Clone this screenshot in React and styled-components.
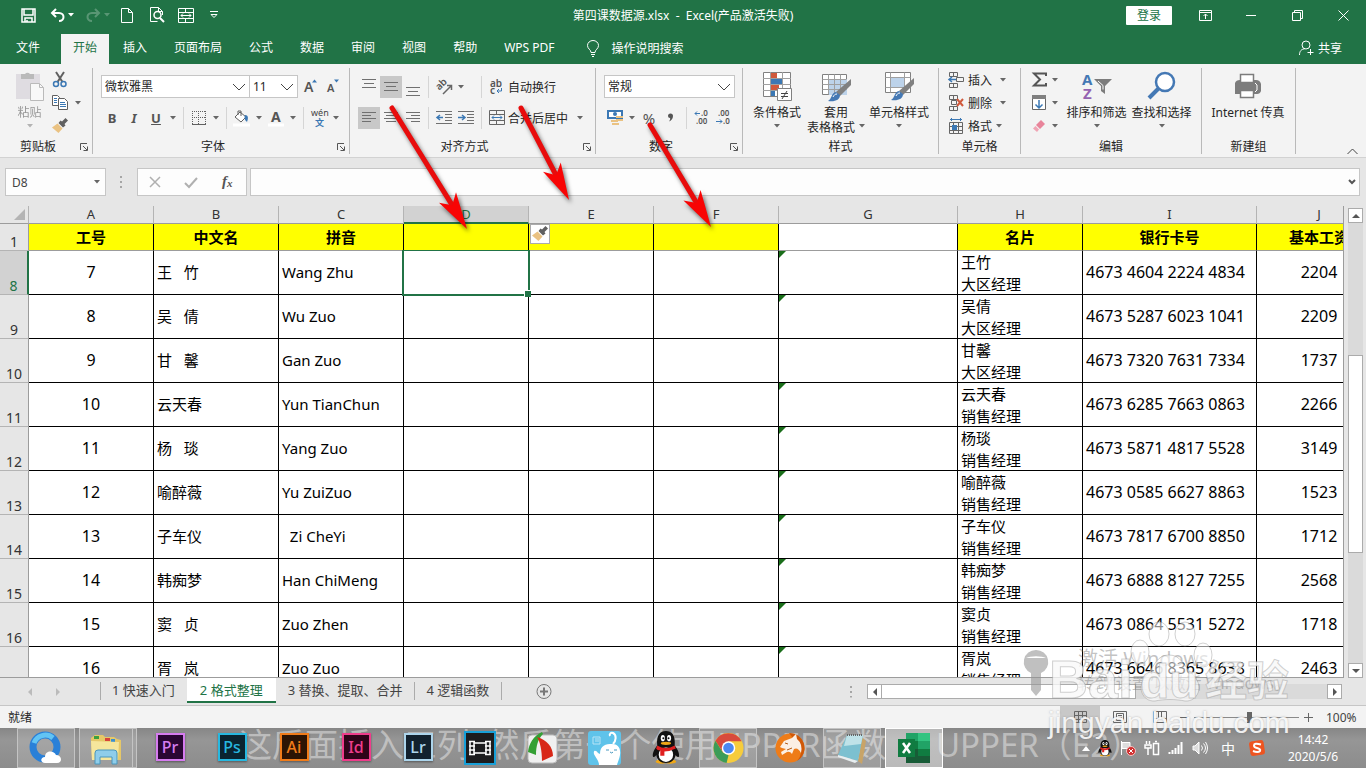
import styled, { createGlobalStyle, css } from "styled-components";

const GlobalStyle = createGlobalStyle`
  * {
    box-sizing: border-box;
  }

  body {
    margin: 0;
    font-family: "Noto Sans", "Noto Sans CJK SC", sans-serif;
    font-size: 12px;
    color: #262626;
    overflow: hidden;
  }

  button, input, select {
    font: inherit;
    color: inherit;
    border: none;
    background: none;
    padding: 0;
    margin: 0;
    border-radius: 0;
  }

  svg {
    display: block;
    flex: none;
    overflow: visible;
  }
`;

const Window = styled.div`
  position: relative;
  display: flex;
  flex-direction: column;
  height: 100vh;
  background-color: #e6e6e6;
`;

/* ---------- title bar and ribbon tabs ---------- */

const TitleBar = styled.header`
  display: grid;
  grid-template-columns: 1fr auto 1fr;
  align-items: center;
  height: 32px;
  padding-bottom: 2px;
  background-color: #217346;
  color: white;
`;

const QuickAccess = styled.div`
  display: flex;
  align-items: center;
  padding-left: 21px;
`;

const QuickButton = styled.button`
  display: flex;
  align-items: center;
  gap: 3px;
  width: ${({ $width }) => $width || 29}px;
  height: 24px;
  opacity: ${({ disabled }) => (disabled ? 0.25 : 1)};
  color: white;
`;

const DocTitle = styled.h1`
  margin: 0;
  font-size: 12px;
  font-weight: 400;
  white-space: pre;
`;

const WindowButtons = styled.div`
  display: flex;
  justify-content: flex-end;
  align-items: center;
`;

const SignIn = styled.button`
  width: 46px;
  height: 19px;
  margin-right: 10px;
  background-color: white;
  color: #217346;
  border-radius: 1px;
`;

const WindowButton = styled.button`
  display: flex;
  justify-content: center;
  align-items: center;
  width: 46px;
  height: 30px;
`;

const TabBar = styled.nav`
  display: flex;
  align-items: flex-end;
  height: 32px;
  padding-left: 3px;
  gap: 1px;
  background-color: #217346;
  color: white;
`;

const RibbonTab = styled.button`
  height: 30px;
  padding: 0 13px 4px;
  white-space: nowrap;

  ${({ $active }) => $active && css`
    margin-left: 7px;
    padding: 0 12px 4px;
    background-color: #f3f3f3;
    color: #217346;
  `}
`;

const TellMe = styled.button`
  display: flex;
  align-items: center;
  gap: 13px;
  height: 30px;
  padding: 0 0 2px 18px;
  flex: 1;
`;

const Share = styled.button`
  display: flex;
  align-items: center;
  gap: 4px;
  height: 30px;
  padding: 0 24px 2px 0;
`;

/* ---------- ribbon ---------- */

const Ribbon = styled.section`
  display: flex;
  height: 94px;
  padding-top: 4px;
  background-color: #f3f3f3;
  border-bottom: 1px solid #d2d2d2;
`;

const Group = styled.div`
  display: flex;
  flex-direction: column;
  flex: 0 0 ${({ $width }) => $width}px;
  height: 86px;
  border-right: 1px solid #b9b9b9;
`;

const GroupBody = styled.div`
  display: flex;
  flex: 1;
  padding-left: ${({ $pad }) => $pad || 0}px;
`;

const GroupLabel = styled.div`
  position: relative;
  height: 16px;
  line-height: 18px;
  padding-right: ${({ $launcher }) => ($launcher ? 16 : 0)}px;
  text-align: center;
`;

const Launcher = styled.button`
  position: absolute;
  right: 4px;
  top: 5px;
`;

const ToolRows = styled.div`
  display: flex;
  flex-direction: column;
  gap: 8px;
  padding-top: 7px;
`;

const ToolRow = styled.div`
  display: flex;
  align-items: center;
  height: 23px;
`;

const Tool = styled.button`
  display: flex;
  justify-content: center;
  align-items: center;
  width: ${({ $width }) => $width || 22}px;
  height: 22px;
  background-color: ${({ $pressed }) => ($pressed ? "#c8c8c8" : "transparent")};
  color: #555;
  font-size: ${({ $size }) => $size || 13}px;
  font-weight: ${({ $bold }) => ($bold ? 700 : 400)};
  font-style: ${({ $italic }) => ($italic ? "italic" : "normal")};
  text-decoration: ${({ $underline }) => ($underline ? "underline" : "none")};
`;

const Sep = styled.span`
  width: 1px;
  height: 22px;
  margin: 0 4px 0 ${({ $wide }) => ($wide ? 14 : 4)}px;
  background-color: #d5d5d5;
`;

const TextTool = styled.button`
  display: flex;
  align-items: center;
  gap: 3px;
  height: 23px;
  padding-left: 3px;
  white-space: nowrap;
`;

const BigTool = styled.button`
  display: flex;
  flex-direction: column;
  align-items: center;
  width: ${({ $width }) => $width}px;
  height: 68px;
  padding-top: 3px;
  line-height: 15px;
  white-space: nowrap;
  opacity: ${({ disabled }) => (disabled ? 0.45 : 1)};

  svg:first-child {
    margin-bottom: 3px;
  }
`;

const CaretLine = styled.span`
  display: flex;
  justify-content: center;
  align-items: center;
  gap: 4px;
  height: 15px;
`;

const SmallStack = styled.div`
  display: flex;
  flex-direction: column;
  width: ${({ $width }) => $width || 32}px;
`;

const SmallTool = styled.button`
  display: flex;
  align-items: center;
  gap: ${({ $gap }) => $gap || 4}px;
  height: 23px;
  white-space: nowrap;
`;

const SmallLabel = styled.span`
  width: ${({ $width }) => $width}px;
  text-align: left;
`;

const PickerBox = styled.span`
  position: relative;
  display: flex;
  align-items: center;
  width: ${({ $width }) => $width}px;
  height: 23px;
  border: 1px solid #c6c6c6;
  background-color: white;

  & + & {
    border-left: none;
  }

  svg {
    position: absolute;
    right: 3px;
    pointer-events: none;
  }
`;

const Picker = styled.select`
  appearance: none;
  width: 100%;
  height: 100%;
  padding-left: 3px;
`;

const Collapse = styled.button`
  margin: auto 8px 2px auto;
`;

/* ---------- formula bar ---------- */

const FormulaBar = styled.div`
  display: flex;
  align-items: center;
  height: 48px;
  padding: 0 6px 0 5px;
`;

const NameBox = styled.div`
  display: flex;
  align-items: center;
  width: 101px;
  height: 28px;
  padding: 0 5px 0 6px;
  background-color: #fdfdfd;
  border: 1px solid #c6c6c6;

  input {
    flex: 1;
    min-width: 0;
    color: #444;
  }
`;

const FxBox = styled.div`
  display: flex;
  justify-content: space-around;
  align-items: center;
  width: 110px;
  height: 28px;
  margin-right: 3px;
  background-color: #fdfdfd;
  border: 1px solid #c6c6c6;
`;

const FormulaBox = styled(NameBox)`
  flex: 1;
  padding: 0 3px;
`;

const Grip = styled.span`
  width: 3px;
  height: 12px;
  margin: 0 14px;
  background: repeating-linear-gradient(#a6a6a6 0 2px, transparent 2px 5px);
  clip-path: inset(0 1px 0 0);
`;

/* ---------- sheet ---------- */

const SheetArea = styled.main`
  display: flex;
  flex: 1;
  min-height: 0;
`;

const SheetView = styled.div`
  flex: 1;
  min-width: 0;
  overflow: hidden;
  border-right: 1px solid #9c9c9c;
  border-bottom: 1px solid #9c9c9c;
`;

const Sheet = styled.table`
  table-layout: fixed;
  width: 1382px;
  border-collapse: separate;
  border-spacing: 0;
  color: black;
`;

const Corner = styled.td`
  height: 18px;
  padding: 0;
  border-right: 1px solid #b4b4b4;
  border-bottom: 1px solid #9c9c9c;
  background-color: #e6e6e6;

  svg {
    margin-left: 14px;
  }
`;

const ColHead = styled.th`
  height: 18px;
  padding: 0;
  font-size: 13px;
  font-weight: 400;
  line-height: ${({ $on }) => ($on ? 16 : 17)}px;
  color: ${({ $on }) => ($on ? "#217346" : "#333")};
  background-color: ${({ $on }) => ($on ? "#d2d2d2" : "#e6e6e6")};
  border-right: 1px solid #b4b4b4;
  border-bottom: ${({ $on }) => ($on ? "2px solid #217346" : "1px solid #9c9c9c")};
`;

const RowHead = styled.th`
  height: ${({ $height }) => $height || 44}px;
  padding: 0;
  vertical-align: bottom;
  font-size: 14px;
  font-weight: 400;
  line-height: 16px;
  color: ${({ $on }) => ($on ? "#217346" : "#333")};
  background-color: ${({ $on }) => ($on ? "#d2d2d2" : "#e6e6e6")};
  border-right: ${({ $on }) => ($on ? "2px solid #217346" : "1px solid #9c9c9c")};
  border-bottom: 1px solid #b4b4b4;
`;

const TitleCell = styled.td`
  position: relative;
  height: 27px;
  padding: 0;
  font-size: 15px;
  font-weight: 700;
  line-height: 25px;
  text-align: center;
  white-space: nowrap;
  background-color: ${({ $blank }) => ($blank ? "white" : "#ffff00")};
  border-right: 1px solid black;
  border-bottom: 1px solid #9c9c9c;
`;

const Cell = styled.td`
  position: relative;
  height: 44px;
  padding: 0 3px 2px;
  font-size: ${({ $digits }) => ($digits ? 16 : 15)}px;
  line-height: 22px;
  text-align: ${({ $center }) => ($center ? "center" : "left")};
  white-space: pre;
  background-color: white;
  border-right: 1px solid black;
  border-bottom: 1px solid black;
`;

const CardText = styled.div`
  height: 41px;
`;

const ErrorMark = styled.span`
  position: absolute;
  left: 0;
  top: 0;
  border-top: 7px solid #1a6e1a;
  border-right: 7px solid transparent;
`;

const Selection = styled.div`
  position: absolute;
  inset: -1px -2px -2px -2px;
  border: 2px solid #217346;
  border-top-width: 1px;
  z-index: 1;

  &::after {
    content: "";
    position: absolute;
    right: -3px;
    bottom: -3px;
    width: 6px;
    height: 6px;
    background-color: #217346;
    border: solid white;
    border-width: 1px 0 0 1px;
  }
`;

const PasteOptions = styled.button`
  position: absolute;
  left: 1px;
  top: 0;
  display: flex;
  justify-content: center;
  align-items: center;
  width: 20px;
  height: 20px;
  background-color: white;
  border: 1px solid #ababab;
`;

const VScroll = styled.div`
  display: flex;
  flex-direction: column;
  width: 22px;
  padding: 2px 3px 0 4px;
`;

const ScrollButton = styled.button`
  display: flex;
  justify-content: center;
  align-items: center;
  flex: none;
  width: 15px;
  height: 15px;
  background-color: white;
  border: 1px solid #ababab;
`;

const VTrack = styled.div`
  display: flex;
  flex-direction: column;
  flex: 1;
  background-color: #dadada;
`;

const VThumb = styled.div`
  flex: 0 0 45%;
  margin-top: 132px;
  background-color: white;
  border: 1px solid #ababab;
`;

const SheetTabs = styled.div`
  display: flex;
  height: 28px;
  border-bottom: 1px solid #c6c6c6;
  color: #444;
`;

const TabArrows = styled.div`
  display: flex;
  gap: 22px;
  width: 100px;
  height: 27px;
  padding-left: 27px;
  align-items: center;
`;

const SheetTab = styled.button`
  height: 18px;
  margin-top: 4px;
  padding: 0 12px 2px 11px;
  font-size: 13px;
  line-height: 16px;
  white-space: nowrap;
  border-left: 1px solid #ababab;
  border-right: ${({ $last }) => ($last ? "1px solid #ababab" : "none")};

  ${({ $active }) => $active && css`
    height: 25px;
    margin-top: 0;
    padding: 0 13px;
    background-color: white;
    color: #217346;
    border-left: none;
    border-bottom: 2px solid #217346;

    & + button {
      border-left: none;
      padding-left: 12px;
    }
  `}
`;

const AddSheet = styled.button`
  width: 16px;
  height: 27px;
  margin-left: 34px;
`;

const HScroll = styled.div`
  display: flex;
  align-items: center;
  height: 27px;
  width: 530px;
  margin-left: auto;
  padding-right: 24px;
`;

const HTrack = styled.div`
  flex: 1;
  height: 15px;
  background-color: #dadada;
`;

const HThumb = styled.div`
  width: 57%;
  height: 15px;
  background-color: white;
  border: 1px solid #ababab;
  border-left: none;
`;

/* ---------- status bar ---------- */

const StatusBar = styled.footer`
  display: flex;
  align-items: center;
  height: 22px;
  padding-left: 8px;
  background-color: #f3f3f3;
`;

const StatusText = styled.span`
  flex: 1;
`;

const ViewButton = styled.button`
  display: flex;
  justify-content: center;
  align-items: center;
  width: 40px;
  height: 22px;
  background-color: ${({ $on }) => ($on ? "#c8c8c8" : "transparent")};
`;

const Zoom = styled.input`
  appearance: none;
  width: 105px;
  height: 12px;
  margin: 0 5px;
  background: linear-gradient(#8a8a8a, #8a8a8a) center / 100% 1px no-repeat;

  &::-webkit-slider-thumb {
    appearance: none;
    width: 5px;
    height: 11px;
    background-color: #666;
  }
`;

const ZoomValue = styled.span`
  width: 53px;
  padding-left: 13px;
  color: #444;
`;

/* ---------- taskbar ---------- */

const Taskbar = styled.div`
  position: relative;
  display: flex;
  height: 40px;
  padding-left: 15px;
  background: linear-gradient(#868686, #969696 30%, #8c8c8c);
`;

const Subtitle = styled.p`
  position: absolute;
  left: 239px;
  top: 0;
  margin: 0;
  font-size: 33px;
  line-height: 34px;
  white-space: pre;
  color: rgba(255, 255, 255, 0.42);
`;

const TaskButton = styled.button`
  position: relative;
  display: flex;
  justify-content: center;
  align-items: center;
  width: 58px;
  height: 40px;
  margin: 0 2px;

  ${({ $open }) => $open && css`
    border: 1px solid #c4c4c4;
    background-color: rgba(255, 255, 255, 0.14);
  `}

  ${({ $active }) => $active && css`
    border: 1px solid white;
    background-color: rgba(255, 255, 255, 0.4);
  `}

  ${({ $stacked }) => $stacked && css`
    padding-right: 4px;

    &::after {
      content: "";
      position: absolute;
      right: 3px;
      top: 0;
      bottom: 0;
      border-right: 1px solid #c4c4c4;
    }
  `}
`;

const AdobeTile = styled.span`
  display: flex;
  justify-content: center;
  align-items: center;
  width: 29px;
  height: 28px;
  margin-bottom: 3px;
  font-size: 16px;
  font-weight: 500;
  line-height: 20px;
  color: ${({ $tint }) => $tint};
  background-color: ${({ $back }) => $back};
  border: 2px solid ${({ $tint }) => $tint};
  box-shadow: 0 1px 2px rgba(0, 0, 0, 0.4);
`;

const Tray = styled.div`
  position: relative;
  display: flex;
  align-items: center;
  gap: 8px;
  margin-left: auto;
  padding-right: 24px;
  color: white;
`;

const InputMode = styled.span`
  width: 24px;
  font-size: 14px;
  text-align: center;
`;

const Clock = styled.div`
  width: 58px;
  margin-left: 10px;
  text-align: center;
  line-height: 17px;
`;

/* ---------- things lying over the window ---------- */

const Arrows = styled.svg`
  position: absolute;
  left: 380px;
  top: 100px;
  pointer-events: none;
  filter: drop-shadow(2px 3px 2px rgba(0, 0, 0, 0.55));
`;

const Activate = styled.div`
  position: absolute;
  right: 58px;
  bottom: 74px;
  width: 230px;
  font-size: 16px;
  line-height: 22px;
  color: rgba(120, 120, 120, 0.45);
  white-space: nowrap;
  pointer-events: none;
`;

const ActivateTitle = styled.div`
  font-size: 20px;
  line-height: 26px;
`;

const Watermark = styled.div`
  position: absolute;
  right: 72px;
  bottom: 28px;
  width: 274px;
  pointer-events: none;
`;

const Logo = styled.svg`
  width: 274px;
  height: 84px;
`;

const LogoText = styled.text`
  font-family: "Liberation Sans", "Noto Sans CJK SC", sans-serif;
  font-weight: 700;
  font-size: ${({ $size }) => $size}px;
  fill: rgba(248, 248, 248, 0.78);
  stroke: rgba(140, 140, 140, 0.4);
  stroke-width: 1;
`;

const LogoUrl = styled.div`
  padding-left: 28px;
  font-family: "Liberation Sans", sans-serif;
  font-size: 30px;
  line-height: 34px;
  color: rgba(255, 255, 255, 0.88);
  text-shadow: 0 0 2px rgba(110, 110, 110, 0.5);
`;

/* ---------- icons ---------- */

function Icon({ w = 16, h = 16, stroke = "#666", children, ...rest }) {
  return (
    <svg width={w} height={h} viewBox={`0 0 ${w} ${h}`} fill="none" stroke={stroke} aria-hidden="true" {...rest}>
      {children}
    </svg>
  );
}

const Caret = ({ color = "#666" }) => (
  <Icon w={6} h={4} stroke="none"><path d="M0 0h6L3 3.5z" fill={color} /></Icon>
);

const Chevron = () => (
  <Icon w={14} h={8} stroke="#444"><path d="M1 1l6 6 6-6" /></Icon>
);

const LauncherIcon = () => (
  <Icon w={8} h={8} stroke="#555"><path d="M.5 7V.5H7M3 3l4 4M7.5 3.500V7.500H3.500" /></Icon>
);

const Lines = ({ rows, y }) => (
  <Icon w={16} h={18} stroke="#707070">
    {rows.map(([x, w], i) => <path key={i} d={`M${x} ${y + i * (rows.length > 3 ? 3 : 4)}.5h${w}`} />)}
  </Icon>
);

const Brush = () => (
  <Icon w={16} h={16} stroke="none">
    <path d="M13.500 0l2.500 2.500-3.500 3.500 1 1.500-2.500 2L6.500 5l2-2.500L10 3.500z" fill="#606060" />
    <path d="M5.500 5.500l5 5L6.500 15 0 9.500z" fill="#eac282" />
  </Icon>
);

const PaintBrush = () => (
  <g stroke="none">
    <path d="M30 5v6L19 22l-4-4z" fill="#808080" />
    <path d="M15 18l4 3c0 5-5 7-12 6 4-2 3-8 8-9z" fill="#4478b4" />
    <path d="M12 23c1-2 2-3 4-3" stroke="white" fill="none" />
  </g>
);

const SaveIcon = () => (
  <Icon w={15} h={15} stroke="white"><path d="M1 1h13v13H1zM3 1v6h9V1M4 14v-4h7v4M6 14v-2" strokeWidth="1.500" /></Icon>
);

const UndoIcon = () => (
  <Icon w={15} h={14} stroke="white"><path d="M6 1L2 5l4 4M2 5h7c6 0 6 8 0 8" strokeWidth="2" /></Icon>
);

const RedoIcon = () => (
  <Icon w={15} h={14} stroke="white"><path d="M9 1l4 4-4 4M13 5H6c-6 0-6 8 0 8" strokeWidth="2" /></Icon>
);

const NewIcon = () => (
  <Icon w={12} h={15} stroke="white"><path d="M.5 .5h7l4 4v10H.5zM7.500 .5v4h4" /></Icon>
);

const PreviewIcon = () => (
  <Icon w={15} h={16} stroke="white">
    <path d="M12.500 8V4.500l-4-4h-8v14h7M8.500 .5v4h4" />
    <circle cx="7.500" cy="8" r="3.500" strokeWidth="1.500" />
    <path d="M10 11l4 4" strokeWidth="2" />
  </Icon>
);

const MergeIcon = ({ color = "#666", arrow = "#3b78b4" }) => (
  <Icon w={16} h={15} stroke={color}>
    <path d="M.5 .5h15v14H.5zM.5 4.500h15M.5 10.500h15M7.500 .5v4M7.500 10.500v4" />
    <path d="M3 7.500h10M5 5.500l-2 2 2 2M11 5.500l2 2-2 2" stroke={arrow} />
  </Icon>
);

const CustomizeIcon = () => (
  <Icon w={8} h={8} stroke="white"><path d="M0 .5h8M1 3.500h6l-3 3z" /></Icon>
);

const PasteIcon = () => (
  <Icon w={30} h={31} stroke="none">
    <path d="M1 3h24v25H1z" fill="#c9c2cc" />
    <path d="M6 3h4a3 3 0 0 1 5 0h4v5H6z" fill="#777" />
    <path d="M15.500 12.500h9l4 4v13h-13z" fill="white" stroke="#777" />
    <path d="M24.500 12.500v4h4" stroke="#777" />
  </Icon>
);

const CutIcon = () => (
  <Icon w={16} h={16}>
    <path d="M4 0l6.500 10M12 0L5.500 10" stroke="#606060" strokeWidth="2" />
    <circle cx="4" cy="12" r="2.500" stroke="#3b78b4" strokeWidth="1.500" />
    <circle cx="11.500" cy="12" r="2.500" stroke="#3b78b4" strokeWidth="1.500" />
  </Icon>
);

const CopyIcon = () => (
  <Icon w={16} h={15} stroke="#606060">
    <path d="M.5 .5h5l2 2v8h-7z" fill="white" />
    <path d="M6.500 3.500h6l3 3v8h-9z" fill="white" />
    <path d="M2 3.500h3M2 5.500h3M2 7.500h3M8 7.500h5M8 9.500h6M8 11.500h6" stroke="#3b78b4" />
  </Icon>
);

const BorderIcon = () => (
  <Icon w={14} h={14} stroke="#606060">
    <path d="M0 .5h14M0 6.500h14M.5 0v14M6.500 0v14M13.500 0v14" strokeDasharray="1 1" />
    <path d="M0 13.500h14" />
  </Icon>
);

const BucketIcon = () => (
  <Icon w={18} h={16} stroke="#606060">
    <path d="M7 2l6 5-5 5-6-5zM5 5V1h3v5" fill="white" />
    <path d="M12 5c4 0 3 4 2 7-2-2-3-3-2-7z" fill="#3b78b4" stroke="none" />
    <path d="M0 15h17" stroke="white" strokeWidth="3" />
  </Icon>
);

const FontColorIcon = () => (
  <Icon w={16} h={16} stroke="none">
    <text x="3" y="12" fontSize="14" fontWeight="700" fill="#555">A</text>
    <path d="M0 15h16" stroke="white" strokeWidth="3" />
  </Icon>
);

const WrapIcon = () => (
  <Icon w={16} h={16}>
    <text x="1" y="8" fontSize="10" fontWeight="600" fill="#555" stroke="none">ab</text>
    <text x="1" y="15" fontSize="10" fontWeight="600" fill="#555" stroke="none">c</text>
    <path d="M12.500 9v3H8M10 10l-2 2 2 2" stroke="#3b78b4" />
  </Icon>
);

const OrientIcon = () => (
  <Icon w={17} h={16}>
    <text x="2" y="9" fontSize="10" fontWeight="600" fill="#555" stroke="none" transform="rotate(-45 6 9)">ab</text>
    <path d="M7 15l8-8M11 6.500h4.500V11" strokeWidth="1.500" />
  </Icon>
);

const IndentIcon = ({ right }) => (
  <Icon w={17} h={14}>
    <path d="M0 .5h16M9 3.500h7M9 6.500h7M9 9.500h7M0 12.500h16" stroke="#707070" />
    <path d={right ? "M0 6.500h7M4 4l3 2.500L4 9" : "M7 6.500H1M4 4L1 6.500 4 9"} stroke="#3b78b4" strokeWidth="1.500" />
  </Icon>
);

const MoneyIcon = () => (
  <Icon w={17} h={17} stroke="none">
    <path d="M1 2h14v7H1z" fill="white" stroke="#3b78b4" strokeWidth="2" />
    <circle cx="8" cy="5" r="2" fill="#3b78b4" />
    <path d="M9 7h7v2H9zM9 10h7v2H9zM4 11h7v2H4zM5 14h7v2H5z" fill="#eac282" />
  </Icon>
);

const DecimalIcon = ({ less }) => (
  <Icon w={16} h={15}>
    <text x={less ? 2 : 7} y="6" fontSize="8" fontWeight="600" fill="#555" stroke="none">{less ? ".00" : ".0"}</text>
    <text x={less ? 7 : 2} y="14" fontSize="8" fontWeight="600" fill="#555" stroke="none">{less ? ".0" : ".00"}</text>
    <path d={less ? "M0 11.500h6M4 9.500l2 2-2 2" : "M6 3.500H1M3 1.500l-2 2 2 2"} stroke="#3b78b4" />
  </Icon>
);

const CondIcon = () => (
  <Icon w={30} h={31} stroke="#808080">
    <path d="M1.500 1.500h27v24h-27z" fill="white" />
    <path d="M9 2h6v5H9zM9 14h8v5H9z" fill="#d0593b" stroke="none" />
    <path d="M9 8h11v5H9zM9 20h4v5H9z" fill="#3b78b4" stroke="none" />
    <path d="M8.500 1v24M20.500 1v24M1 7.500h28M1 13.500h28M1 19.500h28" stroke="#a0a0a0" />
    <path d="M15.500 17.500h14v12h-14z" fill="white" />
    <path d="M19 22.500h7M19 25.500h7M25 20l-5 8" stroke="#444" />
  </Icon>
);

const TableIcon = () => (
  <Icon w={30} h={31} stroke="#808080">
    <path d="M1.500 3.500h24v20h-24z" fill="white" />
    <path d="M8 8h18v16H8z" fill="#bdd3ea" stroke="none" />
    <path d="M1.500 8.500h24M1.500 13.500h24M1.500 18.500h24M7.500 3.500v20M13.500 3.500v20M19.500 3.500v20" stroke="#a0a0a0" />
    <g transform="translate(0 3)"><PaintBrush /></g>
  </Icon>
);

const CellStyleIcon = () => (
  <Icon w={30} h={31} stroke="#808080">
    <path d="M1.500 1.500h25v20h-25z" fill="white" />
    <path d="M1.500 6.500h25M1.500 16.500h25M6.500 1.500v20M20.500 1.500v20" stroke="#a0a0a0" />
    <path d="M7 7h13v9H7z" fill="#bdd3ea" stroke="none" />
    <g transform="translate(0 2)"><PaintBrush /></g>
  </Icon>
);

const InsertCellIcon = () => (
  <Icon w={16} h={16}>
    <path d="M1.500 .5h8v4h-8zM5.500 .5v4M1.500 11.500h8v4h-8zM5.500 11.500v4M8.500 5.500h7v4h-7z" />
    <path d="M8 7.500H2M4 5L1 7.500 4 10" stroke="#3b78b4" strokeWidth="1.500" />
  </Icon>
);

const DeleteCellIcon = () => (
  <Icon w={16} h={16}>
    <path d="M1.500 .5h8v4h-8zM5.500 .5v4M1.500 11.500h8v4h-8zM5.500 11.500v4M3.500 5.500h5v4h-5z" />
    <path d="M9 4l6 7M15 4l-6 7" stroke="#d0593b" strokeWidth="2" />
  </Icon>
);

const FormatCellIcon = () => (
  <Icon w={16} h={16}>
    <path d="M1.500 4.500h13v11h-13zM5.500 4.500v11M10.500 4.500v11M1.500 8.500h13M1.500 12.500h13" />
    <path d="M4 7h5v5H4z" fill="#3b78b4" stroke="none" />
    <path d="M2 1.500h12M3.500 0v3M12.500 0v3" stroke="#3b78b4" />
  </Icon>
);

const SigmaIcon = () => (
  <Icon w={16} h={15}><path d="M14 4V1.500H2l6 6-6 6h12V11" stroke="#555" strokeWidth="2" /></Icon>
);

const FillIcon = () => (
  <Icon w={14} h={15}>
    <path d="M.5 .5h13v14H.5z" fill="white" />
    <path d="M0 0h14v4H0z" fill="#808080" stroke="none" />
    <path d="M7 5v8M3.500 9.500L7 13l3.500-3.500" stroke="#3b78b4" strokeWidth="1.500" />
  </Icon>
);

const EraserIcon = () => (
  <Icon w={14} h={14} stroke="none">
    <path d="M9 1l4 4-5 5-4-4z" fill="#e8849a" />
    <path d="M3.500 7L7 10.500 5 13 1 9.500z" fill="#f0a4b4" />
  </Icon>
);

const SortIcon = () => (
  <Icon w={30} h={31}>
    <text x="0" y="14" fontSize="15" fontWeight="700" fill="#4478b4" stroke="none">A</text>
    <text x="1" y="28" fontSize="15" fontWeight="700" fill="#9562b0" stroke="none">Z</text>
    <path d="M12 8h18l-7 7v8l-4-3v-5z" fill="#7c7c7c" stroke="none" />
    <path d="M16 10l5 4.500v4" stroke="white" />
  </Icon>
);

const FindIcon = () => (
  <Icon w={30} h={31} stroke="#4478b4">
    <circle cx="18" cy="11" r="9" fill="white" strokeWidth="2.500" />
    <path d="M12 17L2 27" strokeWidth="4" />
  </Icon>
);

const PrinterIcon = () => (
  <Icon w={28} h={31} stroke="none">
    <path d="M1 12q1-3 5-3h16q4 0 5 4v7q-1 3-4 3H1z" fill="#7c7c7c" />
    <path d="M6.500 3.500h13v8h-13zM6.500 19.500h13v7h-13z" fill="white" stroke="#7c7c7c" strokeWidth="1.500" />
    <path d="M21 12l2 2v5l-2 2" stroke="white" />
  </Icon>
);

/* ---------- data ---------- */

const menuTabs = ["插入", "页面布局", "公式", "数据", "审阅", "视图", "帮助", "WPS PDF"];

const columns = [
  { id: "A", title: "工号", width: 125 },
  { id: "B", title: "中文名", width: 125 },
  { id: "C", title: "拼音", width: 125 },
  { id: "D", title: "", width: 125 },
  { id: "E", title: "", width: 125 },
  { id: "F", title: "", width: 125 },
  { id: "G", title: "", width: 179, blank: true },
  { id: "H", title: "名片", width: 125 },
  { id: "I", title: "银行卡号", width: 174 },
  { id: "J", title: "基本工资", width: 125 },
];

const rows = [
  { row: 8, no: 7, name: "王   竹", pinyin: "Wang Zhu", card: "王竹\n大区经理", bank: "4673 4604 2224 4834", pay: 2204 },
  { row: 9, no: 8, name: "吴   倩", pinyin: "Wu Zuo", card: "吴倩\n大区经理", bank: "4673 5287 6023 1041", pay: 2209 },
  { row: 10, no: 9, name: "甘   馨", pinyin: "Gan Zuo", card: "甘馨\n大区经理", bank: "4673 7320 7631 7334", pay: 1737, clean: true },
  { row: 11, no: 10, name: "云天春", pinyin: "Yun TianChun", card: "云天春\n销售经理", bank: "4673 6285 7663 0863", pay: 2266 },
  { row: 12, no: 11, name: "杨   琰", pinyin: "Yang Zuo", card: "杨琰\n销售经理", bank: "4673 5871 4817 5528", pay: 3149 },
  { row: 13, no: 12, name: "喻醉薇", pinyin: "Yu ZuiZuo", card: "喻醉薇\n销售经理", bank: "4673 0585 6627 8863", pay: 1523 },
  { row: 14, no: 13, name: "子车仪", pinyin: "  Zi CheYi", card: "子车仪\n销售经理", bank: "4673 7817 6700 8850", pay: 1712 },
  { row: 15, no: 14, name: "韩痴梦", pinyin: "Han ChiMeng", card: "韩痴梦\n销售经理", bank: "4673 6888 8127 7255", pay: 2568 },
  { row: 16, no: 15, name: "窦   贞", pinyin: "Zuo Zhen", card: "窦贞\n销售经理", bank: "4673 0864 5531 5272", pay: 1718 },
  { row: 17, no: 16, name: "胥   岚", pinyin: "Zuo Zuo", card: "胥岚\n销售经理", bank: "4673 6646 8365 8638", pay: 2463 },
];

const adobe = [
  { name: "Pr", tint: "#d67cf0", back: "#2a0634" },
  { name: "Ps", tint: "#27b8e0", back: "#0a2430" },
  { name: "Ai", tint: "#f07c1a", back: "#2c1404" },
  { name: "Id", tint: "#ee3d8b", back: "#2e0419" },
  { name: "Lr", tint: "#add5ec", back: "#12212e" },
];

/* ---------- sections ---------- */

function Head() {
  return (
    <>
      <TitleBar>
        <QuickAccess>
          <QuickButton aria-label="保存"><SaveIcon /></QuickButton>
          <QuickButton aria-label="撤消" $width={36}><UndoIcon /><Caret color="white" /></QuickButton>
          <QuickButton aria-label="恢复" $width={35} disabled><RedoIcon /><Caret color="white" /></QuickButton>
          <QuickButton aria-label="新建"><NewIcon /></QuickButton>
          <QuickButton aria-label="打印预览" $width={28}><PreviewIcon /></QuickButton>
          <QuickButton aria-label="合并" $width={32}><MergeIcon color="white" arrow="white" /></QuickButton>
          <QuickButton aria-label="自定义"><CustomizeIcon /></QuickButton>
        </QuickAccess>
        <DocTitle>第四课数据源.xlsx  -  Excel(产品激活失败)</DocTitle>
        <WindowButtons>
          <SignIn>登录</SignIn>
          <WindowButton aria-label="功能区显示选项">
            <Icon w={13} h={11} stroke="white"><path d="M.5 .5h12v10H.5zM.5 2.500h12M6.500 9V4M4.500 6l2-2 2 2" /></Icon>
          </WindowButton>
          <WindowButton aria-label="最小化"><Icon w={10} h={10} stroke="white"><path d="M0 5.500h10" /></Icon></WindowButton>
          <WindowButton aria-label="还原">
            <Icon w={11} h={11} stroke="white"><path d="M.5 2.500h8v8h-8zM2.500 2.500v-2h8v8h-2" /></Icon>
          </WindowButton>
          <WindowButton aria-label="关闭"><Icon w={11} h={11} stroke="white"><path d="M.5 .5l10 10M10.500 .5l-10 10" /></Icon></WindowButton>
        </WindowButtons>
      </TitleBar>
      <TabBar>
        <RibbonTab>文件</RibbonTab>
        <RibbonTab $active>开始</RibbonTab>
        {menuTabs.map((tab) => <RibbonTab key={tab}>{tab}</RibbonTab>)}
        <TellMe>
          <Icon w={12} h={17} stroke="white">
            <path d="M4 12.500c0-3-3.500-3.500-3.500-7a5.500 5 0 0 1 11 0c0 3.500-3.500 4-3.500 7zM4 14.500h4M5 16.500h2" />
          </Icon>
          操作说明搜索
        </TellMe>
        <Share>
          <Icon w={15} h={16} stroke="white"><circle cx="7" cy="5" r="4" /><path d="M.5 15c0-4 2-6 5-6M11.500 9v6M8.500 12.500h6" /></Icon>
          共享
        </Share>
      </TabBar>
    </>
  );
}

function RibbonGroup({ label, width, pad, launcher, children }) {
  return (
    <Group $width={width}>
      <GroupBody $pad={pad}>{children}</GroupBody>
      <GroupLabel $launcher={launcher}>
        {label}
        {launcher && <Launcher aria-label={`${label}设置`}><LauncherIcon /></Launcher>}
      </GroupLabel>
    </Group>
  );
}

function CaretTool({ label }) {
  return <Tool $width={12} aria-label={label}><Caret /></Tool>;
}

function HomeRibbon() {
  return (
    <Ribbon>
      <RibbonGroup label="剪贴板" width={93} pad={7} launcher>
        <BigTool $width={45} disabled><PasteIcon />粘贴<CaretLine><Caret /></CaretLine></BigTool>
        <SmallStack>
          <SmallTool aria-label="剪切"><CutIcon /></SmallTool>
          <SmallTool aria-label="复制" $gap={7}><CopyIcon /><Caret /></SmallTool>
          <SmallTool aria-label="格式刷"><Brush /></SmallTool>
        </SmallStack>
      </RibbonGroup>

      <RibbonGroup label="字体" width={257} pad={8} launcher>
        <ToolRows>
          <ToolRow>
            <PickerBox $width={149}>
              <Picker aria-label="字体"><option>微软雅黑</option></Picker>
              <Chevron />
            </PickerBox>
            <PickerBox $width={48}>
              <Picker aria-label="字号"><option>11</option></Picker>
              <Chevron />
            </PickerBox>
            <Tool $width={24} aria-label="增大字号">
              <Icon w={13} h={15}>
                <text x="0" y="13" fontSize="14" fontWeight="600" fill="#555" stroke="none">A</text>
                <path d="M8 3.500l2.500-3 2.500 3z" fill="#3b78b4" stroke="none" />
              </Icon>
            </Tool>
            <Tool $width={20} aria-label="减小字号">
              <Icon w={13} h={15}>
                <text x="1" y="13" fontSize="11" fontWeight="600" fill="#555" stroke="none">A</text>
                <path d="M8 .5h5l-2.500 3z" fill="#3b78b4" stroke="none" />
              </Icon>
            </Tool>
          </ToolRow>
          <ToolRow>
            <Tool $bold>B</Tool>
            <Tool $bold $italic>I</Tool>
            <Tool $bold $underline>U</Tool>
            <CaretTool label="下划线" />
            <Sep />
            <Tool aria-label="边框"><BorderIcon /></Tool>
            <CaretTool label="边框选项" />
            <Sep />
            <Tool aria-label="填充颜色"><BucketIcon /></Tool>
            <CaretTool label="填充颜色选项" />
            <Tool aria-label="字体颜色"><FontColorIcon /></Tool>
            <CaretTool label="字体颜色选项" />
            <Sep />
            <Tool aria-label="拼音">
              <Icon w={18} h={18}>
                <text x="1" y="7" fontSize="9" fill="#444" stroke="none">wén</text>
                <text x="5" y="17" fontSize="9" fontWeight="700" fill="#3b78b4" stroke="none">文</text>
              </Icon>
            </Tool>
            <CaretTool label="拼音选项" />
          </ToolRow>
        </ToolRows>
      </RibbonGroup>

      <RibbonGroup label="对齐方式" width={246} pad={8} launcher>
        <ToolRows>
          <ToolRow>
            <Tool aria-label="顶端对齐"><Lines y={1} rows={[[1, 14], [3, 10], [1, 14]]} /></Tool>
            <Tool aria-label="垂直居中" $pressed><Lines y={4} rows={[[1, 14], [3, 10], [1, 14]]} /></Tool>
            <Tool aria-label="底端对齐"><Lines y={9} rows={[[1, 14], [3, 10], [1, 14]]} /></Tool>
            <Sep />
            <Tool aria-label="方向"><OrientIcon /></Tool>
            <CaretTool label="方向选项" />
            <Sep $wide />
            <TextTool><WrapIcon />自动换行</TextTool>
          </ToolRow>
          <ToolRow>
            <Tool aria-label="左对齐" $pressed><Lines y={3} rows={[[1, 14], [1, 9], [1, 14], [1, 9]]} /></Tool>
            <Tool aria-label="居中"><Lines y={3} rows={[[1, 14], [3, 10], [1, 14], [3, 10]]} /></Tool>
            <Tool aria-label="右对齐"><Lines y={3} rows={[[1, 14], [6, 9], [1, 14], [6, 9]]} /></Tool>
            <Sep />
            <Tool aria-label="减少缩进量"><IndentIcon /></Tool>
            <Tool aria-label="增加缩进量"><IndentIcon right /></Tool>
            <Sep />
            <TextTool><MergeIcon />合并后居中</TextTool>
            <Tool $width={24} aria-label="合并选项"><Caret /></Tool>
          </ToolRow>
        </ToolRows>
      </RibbonGroup>

      <RibbonGroup label="数字" width={147} pad={8} launcher>
        <ToolRows>
          <ToolRow>
            <PickerBox $width={131}>
              <Picker aria-label="数字格式"><option>常规</option></Picker>
              <Chevron />
            </PickerBox>
          </ToolRow>
          <ToolRow>
            <Tool aria-label="会计数字格式"><MoneyIcon /></Tool>
            <CaretTool label="会计格式选项" />
            <Tool $size={15}>%</Tool>
            <Tool aria-label="千位分隔">
              <Icon w={6} h={10} stroke="none"><path d="M0 3a2.500 2.500 0 0 1 5 0c0 3-2 4.500-4 5.500 1-1.500 1.500-2.500 1-3.500A2 2 0 0 1 0 3z" fill="#555" /></Icon>
            </Tool>
            <Sep />
            <Tool aria-label="增加小数位"><DecimalIcon /></Tool>
            <Tool aria-label="减少小数位"><DecimalIcon less /></Tool>
          </ToolRow>
        </ToolRows>
      </RibbonGroup>

      <RibbonGroup label="样式" width={196} pad={5}>
        <BigTool $width={58}><CondIcon />条件格式<CaretLine><Caret /></CaretLine></BigTool>
        <BigTool $width={60}><TableIcon />套用<CaretLine>表格格式<Caret /></CaretLine></BigTool>
        <BigTool $width={66}><CellStyleIcon />单元格样式<CaretLine><Caret /></CaretLine></BigTool>
      </RibbonGroup>

      <RibbonGroup label="单元格" width={82} pad={9}>
        <SmallStack $width={60}>
          <SmallTool><InsertCellIcon /><SmallLabel $width={28}>插入</SmallLabel><Caret /></SmallTool>
          <SmallTool><DeleteCellIcon /><SmallLabel $width={28}>删除</SmallLabel><Caret /></SmallTool>
          <SmallTool><FormatCellIcon /><SmallLabel $width={24}>格式</SmallLabel><Caret /></SmallTool>
        </SmallStack>
      </RibbonGroup>

      <RibbonGroup label="编辑" width={181} pad={11}>
        <SmallStack>
          <SmallTool aria-label="求和"><SigmaIcon /><Caret /></SmallTool>
          <SmallTool aria-label="填充" $gap={6}><FillIcon /><Caret /></SmallTool>
          <SmallTool aria-label="清除" $gap={6}><EraserIcon /><Caret /></SmallTool>
        </SmallStack>
        <BigTool $width={65}><SortIcon />排序和筛选<CaretLine><Caret /></CaretLine></BigTool>
        <BigTool $width={65}><FindIcon />查找和选择<CaretLine><Caret /></CaretLine></BigTool>
      </RibbonGroup>

      <RibbonGroup label="新建组" width={94} pad={4}>
        <BigTool $width={84}><PrinterIcon />Internet 传真</BigTool>
      </RibbonGroup>

      <Collapse aria-label="折叠功能区"><Icon w={11} h={7} stroke="#444"><path d="M.5 6l5-5 5 5" /></Icon></Collapse>
    </Ribbon>
  );
}

function FormulaRow() {
  return (
    <FormulaBar>
      <NameBox>
        <input aria-label="名称框" defaultValue="D8" />
        <Caret />
      </NameBox>
      <Grip />
      <FxBox>
        <Icon w={12} h={12} stroke="#b0b0b0"><path d="M1 1l10 10M11 1L1 11" strokeWidth="1.500" /></Icon>
        <Icon w={14} h={12} stroke="#b0b0b0"><path d="M1 7l4 4 8-9" strokeWidth="2" /></Icon>
        <Icon w={14} h={16} stroke="none">
          <text x="1" y="12" fontSize="15" fontStyle="italic" fontFamily="Liberation Serif, serif" fontWeight="700" fill="#555">f</text>
          <text x="6" y="13" fontSize="11" fontStyle="italic" fontFamily="Liberation Serif, serif" fontWeight="700" fill="#555">x</text>
        </Icon>
      </FxBox>
      <FormulaBox>
        <input aria-label="编辑栏" />
        <Icon w={8} h={6} stroke="#555"><path d="M1 1l3 3 3-3" strokeWidth="2" /></Icon>
      </FormulaBox>
    </FormulaBar>
  );
}

function Grid() {
  return (
    <Sheet>
      <colgroup>
        <col width="29" />
        {columns.map((c) => <col key={c.id} width={c.width} />)}
      </colgroup>
      <thead>
        <tr>
          <Corner><Icon w={11} h={11} stroke="none"><path d="M11 0v11H0z" fill="#b4b4b4" /></Icon></Corner>
          {columns.map((c) => <ColHead key={c.id} $on={c.id === "D"}>{c.id}</ColHead>)}
        </tr>
        <tr>
          <RowHead $height={27}>1</RowHead>
          {columns.map((c) => (
            <TitleCell key={c.id} $blank={c.blank}>
              {c.title}
              {c.id === "E" && <PasteOptions aria-label="粘贴选项"><Brush /></PasteOptions>}
            </TitleCell>
          ))}
        </tr>
      </thead>
      <tbody>
        {rows.map((r) => (
          <tr key={r.row}>
            <RowHead $on={r.row === 8}>{r.row}</RowHead>
            <Cell $center $digits>{r.no}</Cell>
            <Cell>{r.name}</Cell>
            <Cell>{r.pinyin}</Cell>
            <Cell>{r.row === 8 && <Selection />}</Cell>
            <Cell />
            <Cell />
            <Cell>{!r.clean && <ErrorMark />}</Cell>
            <Cell><CardText>{r.card}</CardText></Cell>
            <Cell $digits>{r.bank}</Cell>
            <Cell $center $digits>{r.pay}</Cell>
          </tr>
        ))}
      </tbody>
    </Sheet>
  );
}

const arrowPaths = {
  up: "M1 5l4-4 4 4z",
  down: "M1 1h8L5 5z",
  left: "M5 0v8L1 4z",
  right: "M1 0v8l4-4z",
};

function Scroller({ dir, label }) {
  const flat = dir === "up" || dir === "down";
  return (
    <ScrollButton aria-label={label}>
      <Icon w={flat ? 10 : 6} h={flat ? 6 : 8} stroke="none"><path d={arrowPaths[dir]} fill="#555" /></Icon>
    </ScrollButton>
  );
}

function Bottom() {
  return (
    <>
      <SheetTabs>
        <TabArrows>
          <Icon w={6} h={8} stroke="none"><path d={arrowPaths.left} fill="#bbb" /></Icon>
          <Icon w={6} h={8} stroke="none"><path d={arrowPaths.right} fill="#bbb" /></Icon>
        </TabArrows>
        <SheetTab>1 快速入门</SheetTab>
        <SheetTab $active>2 格式整理</SheetTab>
        <SheetTab>3 替换、提取、合并</SheetTab>
        <SheetTab $last>4 逻辑函数</SheetTab>
        <AddSheet aria-label="新工作表">
          <Icon w={16} h={27} stroke="#777"><circle cx="8" cy="13.500" r="7" /><path d="M4 13.500h8M8 9.500v8" strokeWidth="2" /></Icon>
        </AddSheet>
        <HScroll>
          <Grip />
          <Scroller dir="left" label="向左滚动" />
          <HTrack><HThumb /></HTrack>
          <Scroller dir="right" label="向右滚动" />
        </HScroll>
      </SheetTabs>
      <StatusBar>
        <StatusText>就绪</StatusText>
        <ViewButton $on aria-label="普通">
          <Icon w={13} h={12}><path d="M.5 .5h12v11H.5zM4.500 .5v11M8.500 .5v11M.5 4.500h12M.5 8.500h12" /></Icon>
        </ViewButton>
        <ViewButton aria-label="页面布局">
          <Icon w={14} h={12}><path d="M.5 .5h13v11H.5zM3.500 2.500h7v7h-7zM5 4.500h4M5 6.500h4" /></Icon>
        </ViewButton>
        <ViewButton aria-label="分页预览">
          <Icon w={14} h={12}><path d="M.5 .5v11h13V.5zM5.500 .5v7h-5M8.500 .5v7h5" /></Icon>
        </ViewButton>
        <Icon w={9} h={9}><path d="M0 4.500h8" /></Icon>
        <Zoom type="range" aria-label="显示比例" min="10" max="190" defaultValue="106" />
        <Icon w={9} h={9}><path d="M0 4.500h9M4.500 0v9" /></Icon>
        <ZoomValue>100%</ZoomValue>
      </StatusBar>
    </>
  );
}

const Penguin = ({ size }) => (
  <svg width={size * 0.82} height={size} viewBox="0 0 27 33" aria-hidden="true">
    <path d="M5 31c-3-1-1-3 3-3h11c4 0 6 2 3 3-3 1-6 1-8.500 0-2.500 1-6 1-8.500 0z" fill="#f0a818" />
    <path d="M5 14C4 4 8 0 13.500 0S23 4 22 14c3 4 5 8 4 11-1 1-3-1-3-2-1 5-4 8-9.500 8S5 28 4 23c0 1-2 3-3 2-1-3 1-7 4-11z" fill="#111" />
    <ellipse cx="13.500" cy="23" rx="7" ry="7" fill="white" />
    <path d="M5 14q8.500 5 17 0l1 3q-6 3-11 3v4H8v-5q-3 0-4-2z" fill="#e02020" />
    <ellipse cx="10.500" cy="7" rx="2" ry="3" fill="white" />
    <ellipse cx="16.500" cy="7" rx="2" ry="3" fill="white" />
    <circle cx="11" cy="7" r="1" fill="#111" />
    <circle cx="16" cy="7" r="1" fill="#111" />
    <ellipse cx="13.500" cy="12" rx="5" ry="1.500" fill="#f0a818" />
  </svg>
);

function Apps() {
  return (
    <>
      <TaskButton $open aria-label="QQ浏览器">
        <svg width="34" height="34" viewBox="0 0 34 34">
          <circle cx="16" cy="16" r="12" fill="none" stroke="#2a80d8" strokeWidth="7" />
          <path d="M5 12A12 12 0 0 1 24 7" fill="none" stroke="#62c4f4" strokeWidth="5" />
          <path d="M16 32c-5 0-5-6 0-6 0-7 9-7 11-2 6 0 7 8 1 8z" fill="white" />
        </svg>
      </TaskButton>
      <TaskButton $open $stacked aria-label="资源管理器">
        <svg width="34" height="34" viewBox="0 0 34 34">
          <path d="M2 7l4-3h8l2 2h9l3 2 4 1v20H3z" fill="#e6c868" />
          <path d="M5 5h5v3H5z" fill="#3ba040" /><path d="M16 7h5v3h-5z" fill="#d8443a" /><path d="M22 8h4v3h-4z" fill="#3b90d0" />
          <path d="M2 10l28 1-1 18H3z" fill="#f6e69c" />
          <path d="M6 33V22q0-3 3-3h16q3 0 3 3v11h-5v-7H11v7z" fill="#8fcdea" stroke="#4a96bc" />
        </svg>
      </TaskButton>
      {adobe.map((a) => (
        <TaskButton key={a.name}><AdobeTile $tint={a.tint} $back={a.back}>{a.name}</AdobeTile></TaskButton>
      ))}
      <TaskButton aria-label="视频">
        <svg width="32" height="34" viewBox="0 0 32 34">
          <path d="M1 1h30v32H1z" fill="#1c1c1e" stroke="#18a0d8" strokeWidth="2" />
          <path d="M6 10v14M10 10v14M22 10v14M26 10v14M5 10.500h6M5 15h6M5 19h6M5 23.500h6M21 10.500h6M21 15h6M21 19h6M21 23.500h6M10 12h12M10 22h12" stroke="white" strokeWidth="1.500" />
        </svg>
      </TaskButton>
      <TaskButton aria-label="录屏">
        <svg width="31" height="33" viewBox="0 0 31 33">
          <rect x="1" y="3" width="29" height="28" rx="4" fill="#f0f0f0" stroke="#bbb" />
          <path d="M15 0C6 4 2 12 1 20l8 3c0-9 2-16 7-21z" fill="#34a034" />
          <path d="M10 5c3 4 5 14 5 24l11-5c0-9-6-16-16-19z" fill="#d82818" />
        </svg>
      </TaskButton>
      <TaskButton aria-label="助手">
        <svg width="33" height="34" viewBox="0 0 33 34">
          <rect y="0" width="33" height="34" rx="3" fill="#5fc3ea" />
          <path d="M11 34c0-5-4-8-5-11-1-4 2-4 4-1l2 1c0-9 6-10 12-10s9 4 8 11c-1 5-2 6-3 10z" fill="white" />
          <path d="M25 13c3-3 4-9 0-11-2-1-4 1-3 3" fill="none" stroke="white" strokeWidth="2" />
          <path d="M18 19h3M26 19h3M22 21q2 2 3 0" stroke="#4a9ac0" fill="none" />
          <path d="M5 6h7v7H5zM7 8h4M7 10h4" stroke="#b9e4f6" fill="none" />
        </svg>
      </TaskButton>
      <TaskButton aria-label="QQ"><Penguin size={34} /></TaskButton>
      <TaskButton $open aria-label="Chrome">
        <svg width="31" height="32" viewBox="0 0 32 32">
          <circle cx="16" cy="16" r="15.500" fill="#f6cc3c" />
          <path d="M2.500 8.500A15.500 15.500 0 0 1 29.500 9H16l-6 11z" fill="#d84a3c" />
          <path d="M2.500 8.500l7.500 12 6 3-2 8A15.500 15.500 0 0 1 2.500 8.500z" fill="#3c9c58" />
          <circle cx="16" cy="16" r="7" fill="white" />
          <circle cx="16" cy="16" r="5.500" fill="#4c88f0" />
        </svg>
      </TaskButton>
      <TaskButton aria-label="猎豹浏览器">
        <svg width="30" height="34" viewBox="0 0 30 34">
          <circle cx="15" cy="17" r="14.500" fill="#ee7c18" />
          <path d="M14 2a15 15 0 0 1 8 28q7-8 2-15z" fill="#d05808" />
          <path d="M5 16l4-6 8-3 4-4 1 5q6 5 4 14-3-6-7-4l-2 5q-2-3-5-2l-5 3-1-3 5-3-4-1z" fill="#fbefe4" />
          <path d="M10 12l3 1M12 19l5-2" stroke="#b05a18" />
        </svg>
      </TaskButton>
      <TaskButton $open aria-label="记事本">
        <svg width="30" height="33" viewBox="0 0 30 33">
          <path d="M25 5l4 4-4 23-4-3z" fill="#c8a468" />
          <path d="M10 3h16l-5 26-20-6z" fill="#7cc0d0" />
          <path d="M10 3h16l-2 9-17 2z" fill="#bfe2e8" />
          <path d="M1 23l20 6-3 2-17-6z" fill="#e8eef0" />
          <path d="M10 3h16" stroke="#666" strokeWidth="2" strokeDasharray="1 1" />
        </svg>
      </TaskButton>
      <TaskButton $active aria-label="Excel">
        <svg width="34" height="32" viewBox="0 0 34 32">
          <path d="M9 1h12v15H9z" fill="#21a366" /><path d="M21 1h12v8H21z" fill="#33c481" />
          <path d="M21 9h12v8H21z" fill="#21a366" /><path d="M9 9h12v8H9z" fill="#107c41" />
          <path d="M9 17h24v14H9z" fill="#185c37" /><path d="M21 17h12v7H21z" fill="#107c41" />
          <path d="M1 7h17v18H1z" fill="#107c41" />
          <path d="M6 11l7 10M13 11L6 21" stroke="white" strokeWidth="2.500" />
        </svg>
      </TaskButton>
    </>
  );
}

function SystemTray() {
  return (
    <Tray>
      <Icon w={8} h={5} stroke="none"><path d="M0 5l4-5 4 5z" fill="white" /></Icon>
      <Penguin size={17} />
      <Icon w={16} h={16} stroke="white">
        <path d="M1.500 1v14M2 2.500h8v6H2z" fill="#ddd" />
        <circle cx="11" cy="11" r="4.500" fill="#d03030" stroke="#f4c4c4" />
        <path d="M9 9l4 4M13 9l-4 4" />
      </Icon>
      <Icon w={16} h={16} stroke="white">
        <path d="M2.500 1v3M5.500 1v3M1 5h6v3H1zM4 8v7" strokeWidth="1.500" />
        <path d="M9.500 3.500h5v11h-5zM11 1.500h2" strokeWidth="1.500" />
      </Icon>
      <Icon w={16} h={14} stroke="white"><path d="M1.500 13v-2M4.500 13v-4M7.500 13V7M10.500 13V4M13.500 13V1" strokeWidth="2" /></Icon>
      <Icon w={16} h={14} stroke="white">
        <path d="M1 5h2l4-4v12L3 9H1z" fill="#ddd" />
        <path d="M9.500 4.500q2 2.500 0 5M11.500 2.500q4 4.500 0 9M13.500 1q4 6 0 12" />
      </Icon>
      <InputMode>中</InputMode>
      <svg width="18" height="17" viewBox="0 0 18 17" aria-hidden="true">
        <path d="M1 4q0-2 2-2.500L13 0q2 0 2.500 2l1.500 10q0 2-2 2.500L5 16q-2 0-2.500-2z" fill="#ee5420" />
        <path d="M13 4.500q-7-2-7 1 0 2 3 2.500 4 1 3 3-2 2-7 0" fill="none" stroke="white" strokeWidth="2" />
      </svg>
      <Clock>
        <div>14:42</div>
        <div>2020/5/6</div>
      </Clock>
    </Tray>
  );
}

const shaft = (x1, y1, x2, y2) => {
  const len = Math.hypot(x2 - x1, y2 - y1);
  const angle = (Math.atan2(y2 - y1, x2 - x1) * 180) / Math.PI;
  return (
    <g transform={`translate(${x1} ${y1}) rotate(${angle})`}>
      <path d={`M0 0H${len - 24}`} stroke="#e80c0c" strokeWidth="5" strokeLinecap="round" />
      <path d={`M${len} 0L${len - 37} -10L${len - 28} 0L${len - 37} 10z`} fill="#f80404" />
    </g>
  );
};

function Overlays() {
  return (
    <>
      <Arrows width="350" height="140" aria-hidden="true">
        {shaft(12, 8, 87, 129)}
        {shaft(141, 8, 189, 100)}
        {shaft(270, 25, 331, 127)}
      </Arrows>
      <Activate>
        <ActivateTitle>激活 Windows</ActivateTitle>
        转到“设置”以激活 Windows。
      </Activate>
      <Watermark>
        <Logo viewBox="0 0 274 84">
          <g fill="rgba(255,255,255,0.55)" stroke="rgba(140,140,140,0.4)">
            <ellipse cx="139" cy="12" rx="10" ry="12" />
            <ellipse cx="165" cy="12" rx="10" ry="12" />
            <ellipse cx="120" cy="30" rx="9" ry="12" />
            <ellipse cx="183" cy="33" rx="9" ry="12" />
            <path d="M149 33c12 0 14 10 24 20 12 12 4 27-8 26-10-2-20-2-30 0-12 1-20-14-8-26 8-10 10-20 22-20z" />
          </g>
          <path
            d="M16 28a12 12 0 0 1 5 23v17l-5 6-5-6V51a12 12 0 0 1 5-23zM6 36a12 4 0 0 1 20 0z"
            fill="rgba(150,150,150,0.6)"
            fillRule="evenodd"
          />
          <LogoText $size={54} x="29" y="76">Bai</LogoText>
          <LogoText $size={48} x="120" y="76">du</LogoText>
          <LogoText $size={42} x="185" y="74">经验</LogoText>
        </Logo>
        <LogoUrl>jingyan.baidu.com</LogoUrl>
      </Watermark>
    </>
  );
}

export default function App() {
  return (
    <>
      <GlobalStyle />
      <Window>
        <Head />
        <HomeRibbon />
        <FormulaRow />
        <SheetArea>
          <SheetView><Grid /></SheetView>
          <VScroll>
            <Scroller dir="up" label="向上滚动" />
            <VTrack><VThumb /></VTrack>
            <Scroller dir="down" label="向下滚动" />
          </VScroll>
        </SheetArea>
        <Bottom />
        <Taskbar>
          <Subtitle>{"这后面插入三列\u2002然后第一个使用UPPER函数\u2003\u2002UPPER（E2）"}</Subtitle>
          <Apps />
          <SystemTray />
        </Taskbar>
        <Overlays />
      </Window>
    </>
  );
}
